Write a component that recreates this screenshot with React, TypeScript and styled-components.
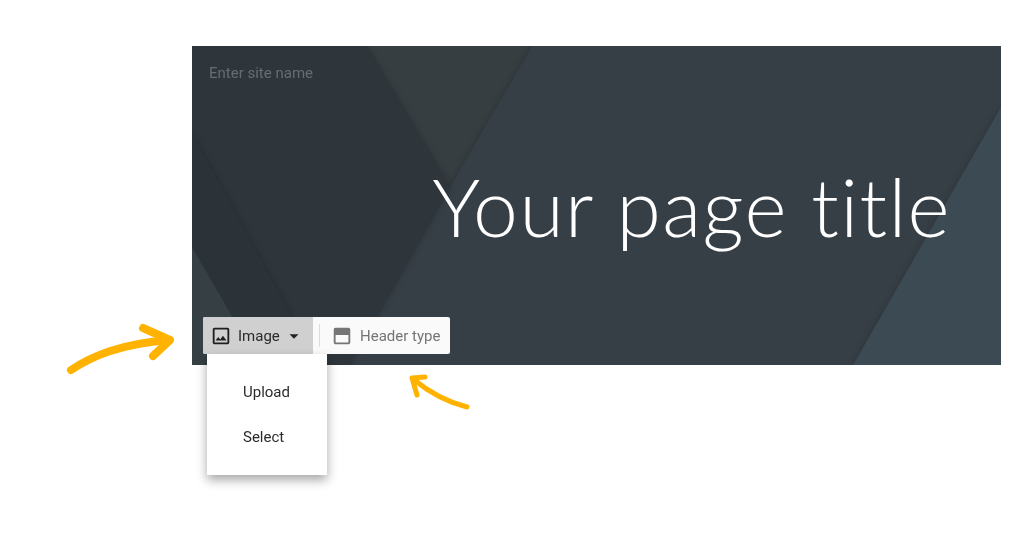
import { createGlobalStyle, styled } from "styled-components";

const GlobalStyle = createGlobalStyle`
  html, body {
    margin: 0;
    background: #fff;
  }
`;

const menuItems = ["Upload", "Select"];

export default function App() {
  return (
    <Page>
      <GlobalStyle />
      <Hero>
        <HeroArt viewBox="0 0 809 319" preserveAspectRatio="none">
          <polygon points="175,0 340,0 258,141" fill="#373e41" />
          <Facet points="340,0 809,0 809,319 158,319 258,141" fill="#373f46" />
          <Facet points="0,0 175,0 258,141 158,319 0,319" fill="#2e363c" />
          <Facet points="0,87 126,319 0,319" fill="#2b3338" />
          <polygon points="0,201 68,319 0,319" fill="#363f43" />
          <Facet points="809,61 661,319 809,319" fill="#3b4a53" />
        </HeroArt>

        <SiteName>Enter site name</SiteName>
        <PageTitle>Your page title</PageTitle>

        <Toolbar>
          <ImageButton>
            <ToolIcon viewBox="0 0 24 24" fill="#1f1f1f">
              <path d="M19 5v14H5V5h14m0-2H5c-1.1 0-2 .9-2 2v14c0 1.1.9 2 2 2h14c1.1 0 2-.9 2-2V5c0-1.1-.9-2-2-2zm-4.86 8.86-3 3.87L9 13.14 6 17h12l-3.86-5.14z" />
            </ToolIcon>
            <ButtonLabel>Image</ButtonLabel>
            <Caret viewBox="0 0 24 24" fill="#222">
              <path d="M6 9.5l6 6 6-6z" />
            </Caret>
          </ImageButton>
          <Divider />
          <HeaderButton>
            <ToolIcon viewBox="0 0 24 24" fill="#757575">
              <path d="M3 5c0-1.1.9-2 2-2h14c1.1 0 2 .9 2 2v14c0 1.1-.9 2-2 2H5c-1.1 0-2-.9-2-2V5zm2 6v8h14v-8H5z" />
            </ToolIcon>
            <HeaderLabel>Header type</HeaderLabel>
          </HeaderButton>

          <Menu>
            {menuItems.map((item) => (
              <MenuItem key={item}>{item}</MenuItem>
            ))}
          </Menu>
        </Toolbar>
      </Hero>

      <Arrow viewBox="0 0 1024 536">
        <path d="M71 370C92 356 120 344 169 340" />
        <path d="M143 328L170 340L153 356" />
      </Arrow>
      <Arrow viewBox="0 0 1024 536" $thin>
        <path d="M467 407C447 402 430 393 413 379" />
        <path d="M425 377L412 378L417 395" />
      </Arrow>
    </Page>
  );
}

const Page = styled.div`
  position: relative;
  width: 1024px;
  height: 536px;
  padding: 46px 23px 0 192px;
  box-sizing: border-box;
  overflow: hidden;
  background: #fff;
  font-family: Roboto, sans-serif;
  filter: blur(0.4px);
`;

const Hero = styled.section`
  position: relative;
  height: 319px;
  box-sizing: border-box;
  padding: 17px 50px 11px 17px;
  background: #373f46;
  display: flex;
  flex-direction: column;
`;

const HeroArt = styled.svg`
  position: absolute;
  inset: 0;
  width: 100%;
  height: 100%;
`;

const Facet = styled.polygon`
  filter: drop-shadow(0 0 3px rgba(0, 0, 0, 0.22));
`;

const SiteName = styled.div`
  position: relative;
  font-size: 15px;
  line-height: 20px;
  color: #666d72;
`;

const PageTitle = styled.h1`
  position: relative;
  margin: 78px 0 0;
  font-family: Lato, sans-serif;
  font-weight: 300;
  font-size: 80.5px;
  font-variant-ligatures: none;
  letter-spacing: 1.4px;
  line-height: 90px;
  text-align: right;
  color: #fff;
  white-space: nowrap;
`;

const Toolbar = styled.div`
  position: relative;
  margin: auto 0 0 -6px;
  width: 247px;
  height: 37px;
  display: flex;
  align-items: center;
  background: #fafafa;
  border-radius: 2px;
`;

const ImageButton = styled.div`
  width: 110px;
  height: 100%;
  box-sizing: border-box;
  padding-left: 7px;
  display: flex;
  align-items: center;
  background: #d0d0d0;
  border-radius: 2px 0 0 2px;
`;

const ToolIcon = styled.svg`
  width: 22px;
  height: 22px;
  flex: none;
`;

const ButtonLabel = styled.span`
  margin-left: 6px;
  font-size: 15px;
  color: #2a2a2a;
`;

const Caret = styled.svg`
  width: 18px;
  height: 18px;
  margin-left: 5px;
`;

const Divider = styled.div`
  width: 1px;
  height: 23px;
  margin-left: 6px;
  background: #dcdcdc;
`;

const HeaderButton = styled.div`
  margin-left: 11px;
  display: flex;
  align-items: center;
`;

const HeaderLabel = styled.span`
  margin-left: 7px;
  font-size: 15px;
  color: #757575;
  white-space: nowrap;
`;

const Menu = styled.div`
  position: absolute;
  top: 37px;
  left: 4px;
  width: 120px;
  height: 121px;
  padding-top: 16px;
  box-sizing: border-box;
  background: #fff;
  box-shadow: 0 5px 10px rgba(0, 0, 0, 0.35);
`;

const MenuItem = styled.div`
  height: 45px;
  padding-left: 36px;
  font-size: 15px;
  line-height: 45px;
  color: #2c2c2c;
`;

const Arrow = styled.svg<{ $thin?: boolean }>`
  position: absolute;
  inset: 0;
  width: 100%;
  height: 100%;
  fill: none;
  stroke: #ffb300;
  stroke-width: ${(p) => (p.$thin ? 5 : 8)};
  stroke-linecap: round;
  stroke-linejoin: round;
  pointer-events: none;
`;
